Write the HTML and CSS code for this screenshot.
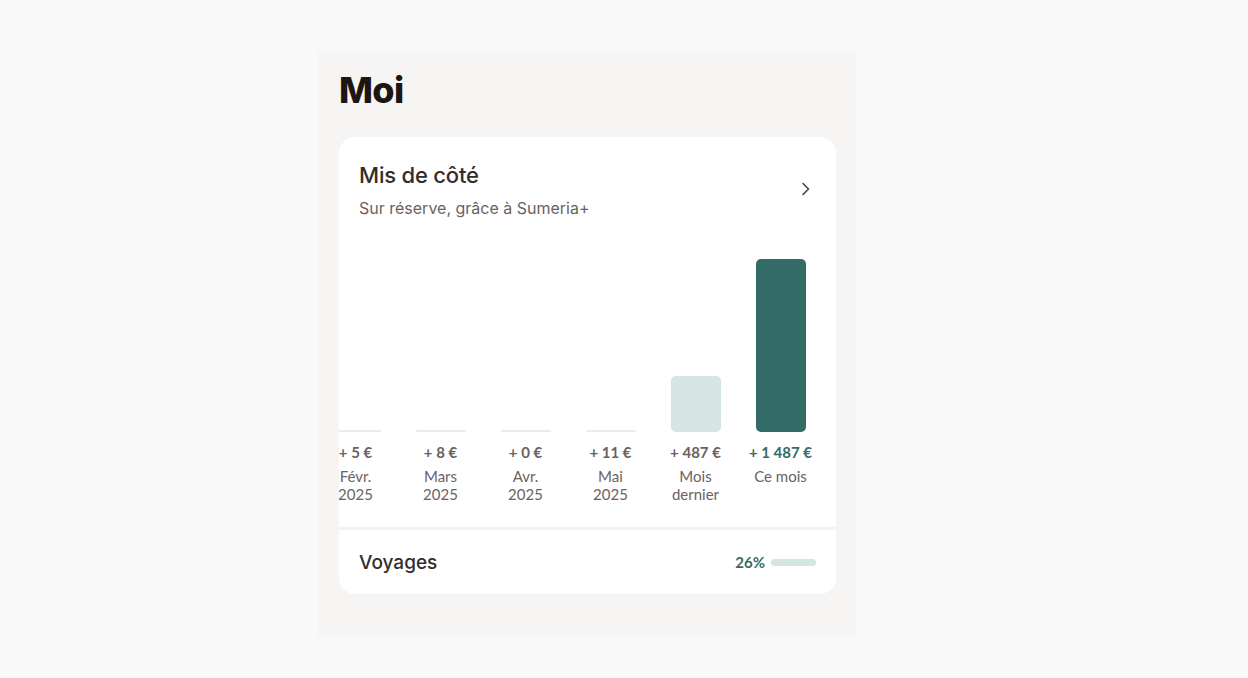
FILE: index.html
```html
<!DOCTYPE html>
<html lang="fr">
<head>
<meta charset="utf-8">
<title>Moi</title>
<link rel="stylesheet" href="styles.css">
</head>
<body>
<main class="panel">
  <h1 class="page-title">Moi</h1>
  <section class="card">
    <header class="card-head">
      <div class="card-titles">
        <h2 class="card-title">Mis de côté</h2>
        <p class="card-sub">Sur réserve, grâce à Sumeria+</p>
      </div>
      <svg class="chevron" width="12" height="16" viewBox="0 0 12 16" aria-hidden="true"><path d="M3 2.5 L8.5 8 L3 13.5" fill="none" stroke="#4a4340" stroke-width="1.6" stroke-linecap="round" stroke-linejoin="round"/></svg>
    </header>
    <div class="chart">
      <div class="col"><div class="plot"><div class="bar bar-empty"></div></div><div class="amount">+ 5 €</div><div class="month">Févr.<br>2025</div></div>
      <div class="col"><div class="plot"><div class="bar bar-empty"></div></div><div class="amount">+ 8 €</div><div class="month">Mars<br>2025</div></div>
      <div class="col"><div class="plot"><div class="bar bar-empty"></div></div><div class="amount">+ 0 €</div><div class="month">Avr.<br>2025</div></div>
      <div class="col"><div class="plot"><div class="bar bar-empty"></div></div><div class="amount">+ 11 €</div><div class="month">Mai<br>2025</div></div>
      <div class="col"><div class="plot"><div class="bar bar-light" style="height:56px"></div></div><div class="amount">+ 487 €</div><div class="month">Mois<br>dernier</div></div>
      <div class="col"><div class="plot"><div class="bar bar-dark" style="height:173px"></div></div><div class="amount amount-current">+ 1 487 €</div><div class="month">Ce mois</div></div>
    </div>
    <div class="divider"></div>
    <div class="goal">
      <span class="goal-name">Voyages</span>
      <div class="goal-progress">
        <span class="goal-pct">26%</span>
        <span class="goal-track"></span>
      </div>
    </div>
  </section>
</main>
</body>
</html>
```
FILE: styles.css
```css
* { box-sizing: border-box; }
html, body { margin: 0; padding: 0; }
body {
  background: #f9f9f9;
  font-family: "Inter", "Liberation Sans", sans-serif;
  color: #2b2320;
  padding: 52px 0 0 318px;
}
.panel {
  width: 538px;
  height: 584px;
  background: #f6f5f3;
  padding: 16px 20px 0 21px;
}
.page-title {
  margin: 0;
  font-size: 36px;
  line-height: 44px;
  font-weight: 800;
  letter-spacing: -0.6px;
  color: #1d1512;
}
.card {
  margin-top: 25px;
  width: 497px;
  background: #ffffff;
  border-radius: 16px;
  overflow: hidden;
}
.card-head {
  display: flex;
  justify-content: space-between;
  align-items: center;
  padding: 24px 20px 0 20px;
}
.card-title {
  margin: 0;
  font-size: 22px;
  line-height: 28px;
  font-weight: 500;
  letter-spacing: -0.2px;
  color: #342c29;
}
.card-sub {
  margin: 8px 0 0 0;
  font-size: 16px;
  line-height: 22px;
  color: #6a625f;
}
.chevron { margin-right: 4px; margin-top: -2px; }
.chart {
  display: flex;
  justify-content: flex-end;
  padding: 0 13px 0 0;
  margin-top: 15px;
  overflow: hidden;
}
.col {
  flex: 0 0 85px;
  height: 293px;
  display: flex;
  flex-direction: column;
  align-items: center;
}
.plot {
  height: 198px;
  width: 50px;
  display: flex;
  align-items: flex-end;
}
.bar { width: 50px; border-radius: 5px; }
.bar-empty { height: 2px; background: #e6eeed; border-radius: 1px; }
.bar-light { background: #d5e5e3; }
.bar-dark { background: #336b67; }
.amount {
  margin-top: 10px;
  font-family: "Lato", "Liberation Sans", sans-serif;
  font-size: 15px;
  line-height: 20px;
  font-weight: 700;
  color: #6a625f;
  white-space: nowrap;
}
.amount-current { color: #336b67; }
.month {
  margin-top: 5px;
  font-family: "Lato", "Liberation Sans", sans-serif;
  font-size: 15px;
  line-height: 18px;
  color: #6a625f;
  text-align: center;
  white-space: nowrap;
}
.divider { height: 3px; background: #f4f3f1; }
.goal {
  display: flex;
  justify-content: space-between;
  align-items: center;
  height: 64px;
  padding: 0 20px;
}
.goal-name {
  font-size: 19px;
  font-weight: 500;
  color: #342c29;
}
.goal-progress { display: flex; align-items: center; gap: 6px; }
.goal-pct {
  font-family: "Lato", "Liberation Sans", sans-serif;
  font-size: 15px;
  font-weight: 700;
  color: #336b67;
}
.goal-track {
  width: 45px;
  height: 7px;
  border-radius: 4px;
  background: #d5e5e3;
}
```
